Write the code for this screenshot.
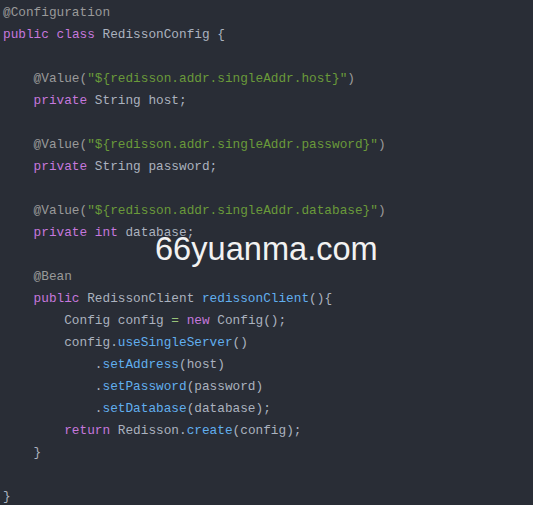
const K = ({ c }: { c: string }) => <span className="text-[#c678dd]">{c}</span>;
const A = ({ c }: { c: string }) => <span className="text-[#9a9a9a]">{c}</span>;
const S = ({ c }: { c: string }) => <span className="text-[#6a9a3a]">{c}</span>;
const F = ({ c }: { c: string }) => <span className="text-[#61afef]">{c}</span>;

const lines: React.ReactNode[] = [
  <A c="@Configuration" />,
  <>
    <K c="public" /> <K c="class" /> RedissonConfig {"{"}
  </>,
  "",
  <>
    {"    "}
    <A c="@Value(" />
    <S c={'"${redisson.addr.singleAddr.host}"'} />
    <A c=")" />
  </>,
  <>
    {"    "}
    <K c="private" /> String host;
  </>,
  "",
  <>
    {"    "}
    <A c="@Value(" />
    <S c={'"${redisson.addr.singleAddr.password}"'} />
    <A c=")" />
  </>,
  <>
    {"    "}
    <K c="private" /> String password;
  </>,
  "",
  <>
    {"    "}
    <A c="@Value(" />
    <S c={'"${redisson.addr.singleAddr.database}"'} />
    <A c=")" />
  </>,
  <>
    {"    "}
    <K c="private" /> <K c="int" /> database;
  </>,
  "",
  <>
    {"    "}
    <A c="@Bean" />
  </>,
  <>
    {"    "}
    <K c="public" /> RedissonClient <F c="redissonClient" />(){"{"}
  </>,
  <>
    {"        "}Config config <span className="text-[#98c379]">=</span> <K c="new" /> Config();
  </>,
  <>
    {"        "}config.<F c="useSingleServer" />()
  </>,
  <>
    {"            "}.<F c="setAddress" />(host)
  </>,
  <>
    {"            "}.<F c="setPassword" />(password)
  </>,
  <>
    {"            "}.<F c="setDatabase" />(database);
  </>,
  <>
    {"        "}
    <K c="return" /> Redisson.<F c="create" />(config);
  </>,
  "    }",
  "",
  "}",
];

export default function App() {
  return (
    <div className="relative h-[505px] w-[533px] overflow-hidden bg-[#292d36]">
      <pre className="pl-[3px] pt-[2px] font-['Liberation_Mono',monospace] text-[12.75px] leading-[22px] text-[#abb2bf]">
        {lines.map((l, i) => (
          <div key={i} className="h-[22px] whitespace-pre">
            {l}
          </div>
        ))}
      </pre>
      <div className="absolute left-[155px] top-[230px] font-['Liberation_Sans',Arial,sans-serif] text-[32.6px] leading-[38px] text-[#f2f2f2]">
        66yuanma.com
      </div>
    </div>
  );
}
